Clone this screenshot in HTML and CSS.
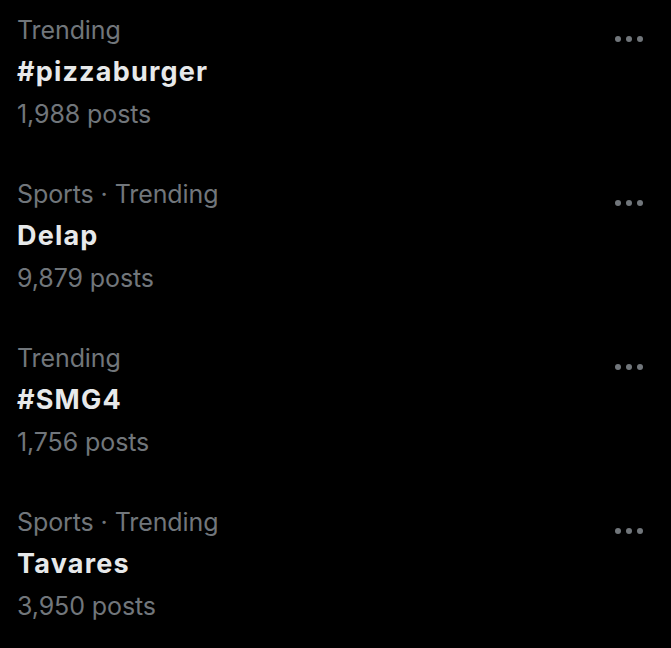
FILE: index.html
```html
<!DOCTYPE html>
<html>
<head>
<meta charset="utf-8">
<link rel="stylesheet" href="styles.css">
</head>
<body>
<div class="list">
  <div class="item">
    <div class="text">
      <div class="meta">Trending</div>
      <div class="title">#pizzaburger</div>
      <div class="meta">1,988 posts</div>
    </div>
    <div class="more"><span></span><span></span><span></span></div>
  </div>
  <div class="item">
    <div class="text">
      <div class="meta">Sports · Trending</div>
      <div class="title">Delap</div>
      <div class="meta">9,879 posts</div>
    </div>
    <div class="more"><span></span><span></span><span></span></div>
  </div>
  <div class="item">
    <div class="text">
      <div class="meta">Trending</div>
      <div class="title">#SMG4</div>
      <div class="meta">1,756 posts</div>
    </div>
    <div class="more"><span></span><span></span><span></span></div>
  </div>
  <div class="item">
    <div class="text">
      <div class="meta">Sports · Trending</div>
      <div class="title">Tavares</div>
      <div class="meta">3,950 posts</div>
    </div>
    <div class="more"><span></span><span></span><span></span></div>
  </div>
</div>
</body>
</html>
```
FILE: styles.css
```css
html, body {
  margin: 0;
  padding: 0;
  background: #000;
}
body {
  font-family: Inter, "Noto Sans", sans-serif;
  width: 671px;
  height: 648px;
  overflow: hidden;
}
.list {
  display: flex;
  flex-direction: column;
}
.item {
  height: 164px;
  box-sizing: border-box;
  padding: 9px 0 0 17px;
  display: flex;
  justify-content: space-between;
}
.meta {
  color: #71767b;
  font-size: 25px;
  line-height: 42px;
  letter-spacing: -0.1px;
}
.title {
  color: #e7e9ea;
  font-size: 27px;
  font-weight: 700;
  line-height: 42px;
  letter-spacing: 1.2px;
}
.more {
  display: flex;
  gap: 5px;
  padding: 27px 28px 0 0;
  height: 6px;
}
.more span {
  width: 6px;
  height: 6px;
  border-radius: 50%;
  background: #71767b;
}
```
